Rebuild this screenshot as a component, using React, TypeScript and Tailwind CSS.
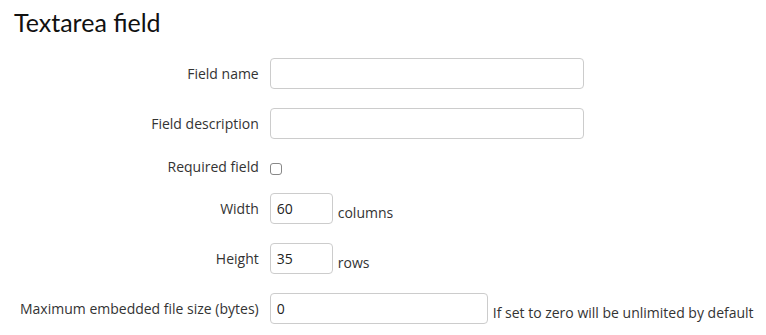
import React from "react";

const inputCls =
  "h-[31px] rounded-[4px] border border-[#cccccc] bg-white px-[6px] text-[14px] text-[#222] outline-none";

export default function App() {
  return (
    <div
      className="min-h-screen bg-white pl-[13px] text-[#333]"
      style={{ fontFamily: '"Open Sans", "Liberation Sans", sans-serif' }}
    >
      <h1
        className="pt-[7px] pl-px text-[25px] leading-[30px] font-normal text-[#111]"
        style={{ fontFamily: 'Lato, "Open Sans", sans-serif' }}
      >
        Textarea field
      </h1>
      <div className="mt-[21px] grid grid-cols-[auto_1fr] items-center gap-x-[11px] gap-y-[19px] pl-[7px] text-[14px]">
        <label className="text-right">Field name</label>
        <div>
          <input type="text" className={`${inputCls} w-[314px]`} />
        </div>

        <label className="text-right">Field description</label>
        <div>
          <input type="text" className={`${inputCls} w-[314px]`} />
        </div>

        <label className="h-[16px] pt-px text-right leading-[16px]">Required field</label>
        <div className="flex h-[16px] items-center">
          <input
            type="checkbox"
            className="mt-[5px] h-[12px] w-[12px] appearance-none rounded-[3px] border border-[#888] bg-white"
          />
        </div>

        <label className="text-right">Width</label>
        <div className="flex items-end gap-[5px]">
          <input type="text" defaultValue="60" className={`${inputCls} w-[63px]`} />
          <span className="pb-[1px]">columns</span>
        </div>

        <label className="text-right">Height</label>
        <div className="flex items-end gap-[5px]">
          <input type="text" defaultValue="35" className={`${inputCls} w-[63px]`} />
          <span className="pb-[1px]">rows</span>
        </div>

        <label className="text-right">Maximum embedded file size (bytes)</label>
        <div className="flex items-end gap-[5px]">
          <input type="text" defaultValue="0" className={`${inputCls} w-[218px]`} />
          <span className="pb-[1px]">If set to zero will be unlimited by default</span>
        </div>
      </div>
    </div>
  );
}
